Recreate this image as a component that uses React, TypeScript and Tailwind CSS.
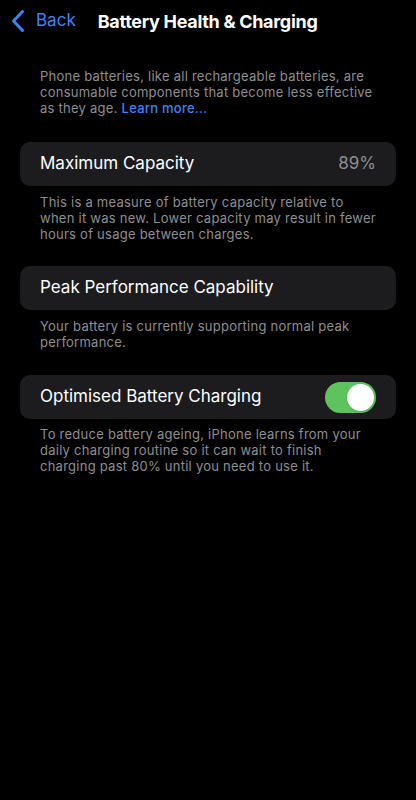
export default function App() {
  return (
    <div className="min-h-[800px] w-[416px] bg-black font-['Inter',sans-serif] text-white">
      {/* Nav bar */}
      <div className="flex h-[42px] items-center">
        <div className="flex items-center pl-[11px]">
          <svg width="14" height="24" viewBox="0 0 14 24" fill="none">
            <path d="M11.5 2.5 L2.5 12 L11.5 21.5" stroke="#3a85f4" strokeWidth="3" strokeLinecap="round" strokeLinejoin="round" />
          </svg>
          <span className="ml-[11px] text-[17px] text-[#3a85f4]">Back</span>
        </div>
        <span className="ml-[22px] text-[18px] font-bold tracking-[-0.3px]">Battery Health &amp; Charging</span>
      </div>

      <div className="px-[20px] pt-[26px]">
        <p className="px-[20px] text-[13px] leading-[16px] tracking-[0.25px] text-[#8e8e93]">
          Phone batteries, like all rechargeable batteries, are consumable components that become less effective as they age.{" "}
          <span className="font-medium text-[#3a85f4]">Learn more...</span>
        </p>

        <div className="mt-[26px] flex h-[44px] items-center justify-between rounded-[10px] bg-[#1c1c1e] px-[20px]">
          <span className="text-[17px]">Maximum Capacity</span>
          <span className="text-[17px] text-[#8e8e93]">89%</span>
        </div>
        <p className="mt-[8px] px-[20px] text-[13px] leading-[16px] tracking-[0.25px] text-[#8e8e93]">
          This is a measure of battery capacity relative to when it was new. Lower capacity may result in fewer hours of usage between charges.
        </p>

        <div className="mt-[24px] flex h-[44px] items-center rounded-[10px] bg-[#1c1c1e] px-[20px]">
          <span className="text-[17px]">Peak Performance Capability</span>
        </div>
        <p className="mt-[8px] px-[20px] text-[13px] leading-[16px] tracking-[0.25px] text-[#8e8e93]">
          Your battery is currently supporting normal peak performance.
        </p>

        <div className="mt-[25px] flex h-[44px] items-center justify-between rounded-[10px] bg-[#1c1c1e] px-[20px]">
          <span className="text-[17px]">Optimised Battery Charging</span>
          <div className="flex h-[31px] w-[51px] items-center justify-end rounded-full bg-[#5fc35d] p-[2px]">
            <div className="h-[27px] w-[27px] rounded-full bg-white shadow" />
          </div>
        </div>
        <p className="mt-[7px] px-[20px] text-[13px] leading-[16px] tracking-[0.25px] text-[#8e8e93]">
          To reduce battery ageing, iPhone learns from your daily charging routine so it can wait to finish charging past 80% until you need to use it.
        </p>
      </div>
    </div>
  );
}
